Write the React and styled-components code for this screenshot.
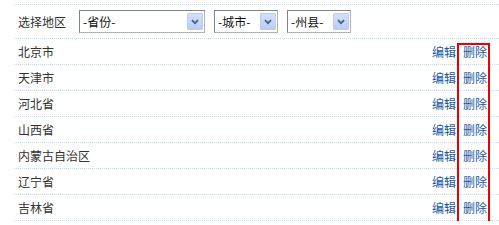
import React from "react";
import styled, { createGlobalStyle } from "styled-components";

const Global = createGlobalStyle`
  html, body { margin: 0; padding: 0; background: #fff; }
  body { font-family: "Noto Sans CJK SC", "Noto Sans", sans-serif; font-size: 12px; color: #333; }
`;

const dotted = `
  background-image: linear-gradient(to right, #bfe0f4 50%, transparent 50%);
  background-size: 2px 1px;
  background-repeat: repeat-x;
`;

const Page = styled.div`
  position: relative;
  padding: 4px 0 0 14px;
  width: 499px;
  box-sizing: border-box;
`;

const List = styled.div`
  padding-top: 1px;
  ${dotted}
  background-position: 0 0;
`;

const FilterRow = styled.div`
  display: flex;
  align-items: center;
  height: 33px;
  padding: 0 0 1px 4px;
  ${dotted}
  background-position: 0 100%;
`;

const Label = styled.span`
  width: 61px;
  line-height: 14px;
`;

const Select = styled.div`
  box-sizing: border-box;
  width: ${(p) => p.$w}px;
  height: 23px;
  margin-right: ${(p) => p.$mr}px;
  border: 1px solid #7f8488;
  border-bottom-color: #aeb2b6;
  border-right-color: #aeb2b6;
  display: flex;
  align-items: center;
  justify-content: space-between;
  padding: 0 1px 0 3px;
  color: #111;
  background: #fff;
`;

const Arrow = styled.span`
  box-sizing: border-box;
  width: 16px;
  height: 17px;
  border: 1px solid #bccdf0;
  border-radius: 1px;
  background: linear-gradient(#d3e0fb, #b8cdf5);
  display: flex;
  align-items: center;
  justify-content: center;
`;

const Row = styled.div`
  display: flex;
  align-items: center;
  height: 25px;
  padding: 0 12px 1px 4px;
  ${dotted}
  background-position: 0 100%;
`;

const Name = styled.span`
  flex: 1;
  line-height: 14px;
`;

const Link = styled.a`
  color: #1b589f;
  text-decoration: none;
  margin-left: ${(p) => p.$ml || 0}px;
  line-height: 14px;
`;

const Highlight = styled.div`
  position: absolute;
  left: 457px;
  top: 43px;
  width: 33px;
  height: 181px;
  box-sizing: border-box;
  border: 2px solid #ee0000;
  pointer-events: none;
`;

const Chevron = () => (
  <svg width="8" height="6" viewBox="0 0 8 6">
    <path d="M1 1.2 L4 4.2 L7 1.2" fill="none" stroke="#4a5f87" strokeWidth="1.8" />
  </svg>
);

const provinces = ["北京市", "天津市", "河北省", "山西省", "内蒙古自治区", "辽宁省", "吉林省"];

export default function App() {
  return (
    <>
      <Global />
      <Page>
        <List>
          <FilterRow>
            <Label>选择地区</Label>
            <Select $w={126} $mr={9}>
              <span>-省份-</span>
              <Arrow><Chevron /></Arrow>
            </Select>
            <Select $w={64} $mr={9}>
              <span>-城市-</span>
              <Arrow><Chevron /></Arrow>
            </Select>
            <Select $w={64} $mr={0}>
              <span>-州县-</span>
              <Arrow><Chevron /></Arrow>
            </Select>
          </FilterRow>
          {provinces.map((p) => (
            <Row key={p}>
              <Name>{p}</Name>
              <Link href="#">编辑</Link>
              <Link href="#" $ml={7}>删除</Link>
            </Row>
          ))}
        </List>
        <Highlight />
      </Page>
    </>
  );
}
